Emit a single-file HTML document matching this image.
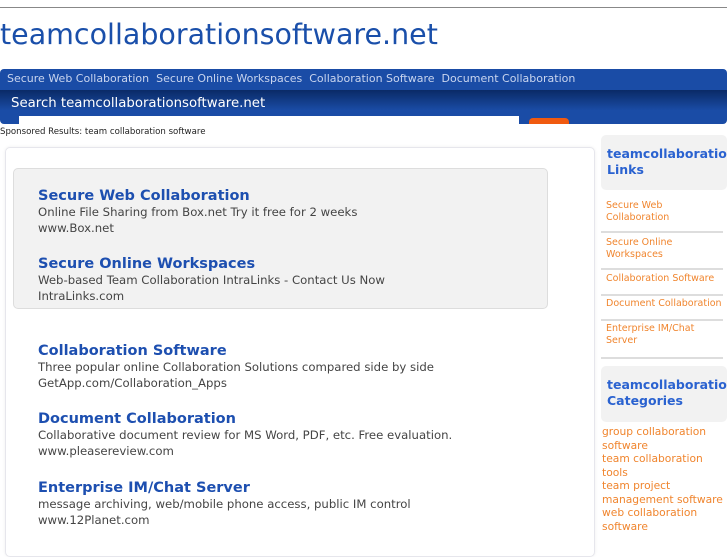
<!DOCTYPE html><html><head><style>
*{margin:0;padding:0;box-sizing:border-box}
body{width:727px;height:545px;overflow:hidden;background:#fff;font-family:"DejaVu Sans","Liberation Sans",sans-serif;position:relative}
.a{position:absolute;white-space:nowrap}
.t{font-weight:bold;font-size:14.5px;color:#1d4fb0}
.d{font-size:11.7px;color:#444;line-height:16px}
.o{color:#f0852e;font-size:9.5px;line-height:12px}
.sh{position:absolute;left:601px;width:126px;background:#f2f2f2;border-radius:5px;color:#2a62d0;font-weight:bold;font-size:12.5px;line-height:16px;padding:11px 0 0 6px;overflow:hidden;white-space:nowrap}
.sl{position:absolute;left:601px;width:122px;border-bottom:2px solid #ddd;padding-left:5px}
</style></head><body>
<div class="a" style="left:0;top:7px;width:727px;border-top:1px solid #888"></div>
<div class="a" style="left:0;top:18px;font-size:28.5px;color:#1a4faa">teamcollaborationsoftware.net</div>
<div class="a" style="left:0;top:69px;width:727px;height:21px;background:#1a4ca6;border-radius:4px 4px 0 0"></div>
<div class="a" style="left:7px;top:72px;font-size:11px;color:#c9d5ef">Secure Web Collaboration&nbsp; Secure Online Workspaces&nbsp; Collaboration Software&nbsp; Document Collaboration</div>
<div class="a" style="left:0;top:90px;width:727px;height:34px;background:linear-gradient(#0a2a66,#1a4ca6 60%);border-radius:0 0 4px 4px"></div>
<div class="a" style="left:11px;top:96px;font-size:13.3px;color:#fff">Search teamcollaborationsoftware.net</div>
<div class="a" style="left:19px;top:116px;width:500px;height:8px;background:#fff"></div>
<div class="a" style="left:529px;top:118px;width:40px;height:6px;background:#f05a10;border-radius:4px 4px 0 0"></div>
<div class="a" style="left:0;top:127px;font-size:8.6px;color:#222">Sponsored Results: team collaboration software</div>
<div class="a" style="left:5px;top:147px;width:590px;height:410px;border:1px solid #e6e6ec;border-radius:5px;box-shadow:0 0 3px #eee"></div>
<div class="a" style="left:13px;top:168px;width:535px;height:141px;background:#f2f2f2;border:1px solid #ddd;border-radius:5px"></div>
<div class="a t" style="left:38px;top:188px">Secure Web Collaboration</div>
<div class="a d" style="left:38px;top:204px">Online File Sharing from Box.net Try it free for 2 weeks<br>www.Box.net</div>
<div class="a t" style="left:38px;top:256px">Secure Online Workspaces</div>
<div class="a d" style="left:38px;top:272px">Web-based Team Collaboration IntraLinks - Contact Us Now<br>IntraLinks.com</div>
<div class="a t" style="left:38px;top:343px">Collaboration Software</div>
<div class="a d" style="left:38px;top:359px">Three popular online Collaboration Solutions compared side by side<br>GetApp.com/Collaboration_Apps</div>
<div class="a t" style="left:38px;top:411px">Document Collaboration</div>
<div class="a d" style="left:38px;top:427px">Collaborative document review for MS Word, PDF, etc. Free evaluation.<br>www.pleasereview.com</div>
<div class="a t" style="left:38px;top:480px">Enterprise IM/Chat Server</div>
<div class="a d" style="left:38px;top:496px">message archiving, web/mobile phone access, public IM control<br>www.12Planet.com</div>
<div class="sh" style="top:135px;height:55px">teamcollaborationsoftware<br>Links</div>
<div class="sl o" style="top:200px;height:33px">Secure Web<br>Collaboration</div>
<div class="sl o" style="top:237px;height:33px">Secure Online<br>Workspaces</div>
<div class="sl o" style="top:273px;height:23px">Collaboration Software</div>
<div class="sl o" style="top:298px;height:23px">Document Collaboration</div>
<div class="sl o" style="top:323px;height:36px">Enterprise IM/Chat<br>Server</div>
<div class="sh" style="top:366px;height:56px">teamcollaborationsoftware<br>Categories</div>
<div class="a" style="left:602px;top:425px;font-size:10.7px;line-height:13.5px;color:#f0852e">group collaboration<br>software<br>team collaboration<br>tools<br>team project<br>management software<br>web collaboration<br>software</div>
</body></html>
